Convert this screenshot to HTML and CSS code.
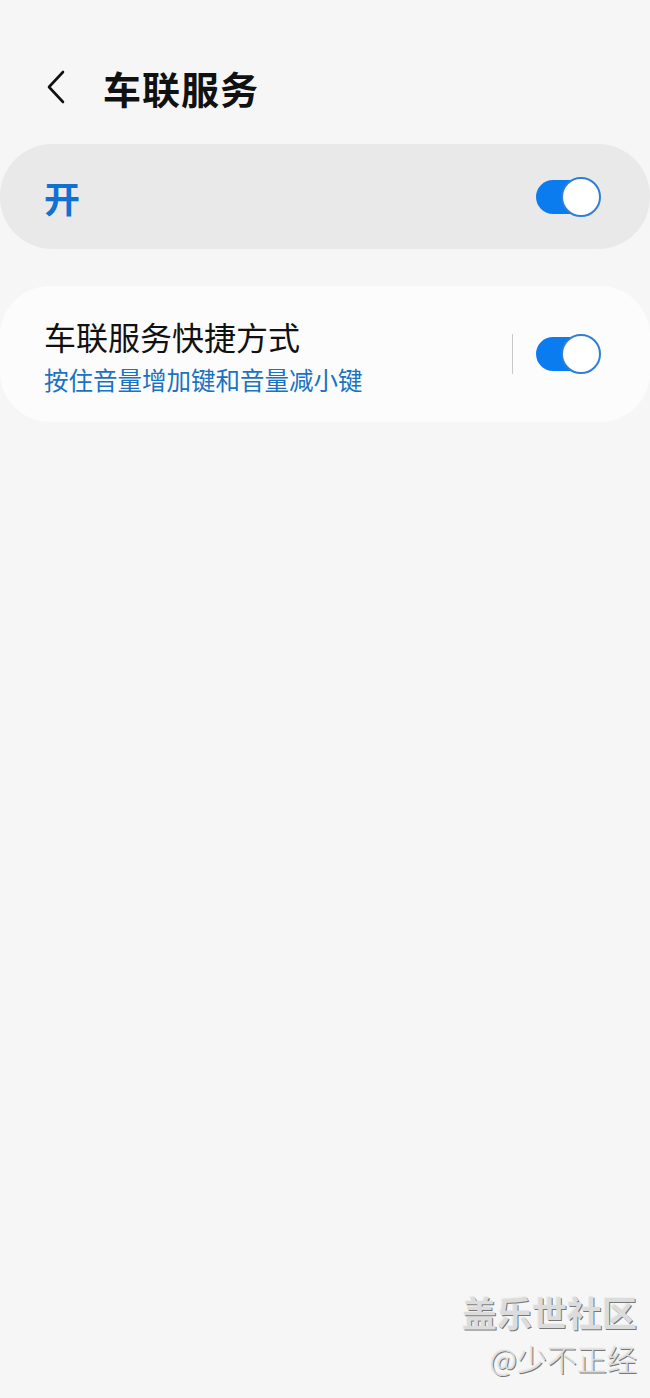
FILE: index.html
```html
<!DOCTYPE html>
<html lang="zh-CN">

<head>
    <meta charset="UTF-8">
    <meta name="viewport" content="width=device-width, initial-scale=1.0">
    <title>车联服务</title>
    <link rel="stylesheet" href="styles.css">
</head>

<body>
    <header class="top-bar">
        <button class="back-btn" aria-label="返回">
            <svg width="24" height="36" viewBox="0 0 24 36">
                <path d="M19 3 L5 18 L19 33" fill="none" stroke="#111" stroke-width="2.6" stroke-linecap="round" stroke-linejoin="round"/>
            </svg>
        </button>
        <h1>车联服务</h1>
    </header>

    <main>
        <div class="master-card">
            <span class="master-label">开</span>
            <span class="switch on"><span class="knob"></span></span>
        </div>

        <div class="card">
            <div class="row">
                <div class="row-text">
                    <div class="row-title">车联服务快捷方式</div>
                    <div class="row-sub">按住音量增加键和音量减小键</div>
                </div>
                <span class="divider"></span>
                <span class="switch on"><span class="knob"></span></span>
            </div>
        </div>
    </main>

    <div class="watermark">
        <div class="wm-big">盖乐世社区</div>
        <div class="wm-small">@少不正经</div>
    </div>
</body>

</html>
```
FILE: styles.css
```css
body {
    font-family: "Noto Sans CJK SC", "Noto Sans", sans-serif;
    background-color: #f6f6f6;
    margin: 0;
    padding: 0;
    width: 650px;
    height: 1398px;
    position: relative;
    overflow: hidden;
}

.top-bar {
    display: flex;
    align-items: center;
    height: 60px;
    margin-top: 57px;
    padding-left: 44px;
}

.back-btn {
    background: none;
    border: none;
    padding: 0;
    width: 24px;
    height: 36px;
    margin-right: 35px;
    cursor: pointer;
}

.top-bar h1 {
    margin: 0;
    font-size: 38px;
    font-weight: 700;
    color: #111;
    letter-spacing: 1px;
}

main {
    margin-top: 27px;
}

.master-card {
    height: 105px;
    background-color: #e9e9e9;
    border-radius: 52px;
    display: flex;
    align-items: center;
    justify-content: space-between;
    padding: 0 49px 0 44px;
}

.master-label {
    font-size: 36px;
    font-weight: 700;
    color: #1170d4;
}

.card {
    margin-top: 37px;
    background-color: #fcfcfc;
    border-radius: 50px;
    height: 136px;
    display: flex;
    align-items: center;
}

.row {
    flex: 1;
    display: flex;
    align-items: center;
    padding: 0 49px 0 44px;
}

.row-text {
    flex: 1;
    padding-top: 4px;
}

.row-title {
    font-size: 32px;
    color: #111;
    line-height: 40px;
}

.row-sub {
    font-size: 24.5px;
    color: #1a72c2;
    line-height: 32px;
    margin-top: 8px;
}

.divider {
    width: 1px;
    height: 40px;
    background-color: #c9c9c9;
    margin-right: 23px;
}

.switch {
    position: relative;
    width: 65px;
    height: 40px;
    display: inline-block;
}

.switch::before {
    content: "";
    position: absolute;
    left: 0;
    top: 3px;
    width: 56px;
    height: 34px;
    border-radius: 17px;
    background-color: #0b7cf0;
}

.switch .knob {
    position: absolute;
    right: 0;
    top: 0;
    width: 36px;
    height: 36px;
    border-radius: 50%;
    background-color: #fff;
    border: 2px solid #2f7fd6;
}

.watermark {
    position: absolute;
    right: 13px;
    bottom: 20px;
    text-align: right;
    color: #dcdcdc;
    text-shadow: 1px 1px 0 #777, -1px -1px 0 #eee;
}

.wm-big {
    font-size: 35px;
    font-weight: 700;
    line-height: 44px;
}

.wm-small {
    font-size: 30px;
    font-weight: 300;
    line-height: 40px;
    margin-top: 4px;
}
```
